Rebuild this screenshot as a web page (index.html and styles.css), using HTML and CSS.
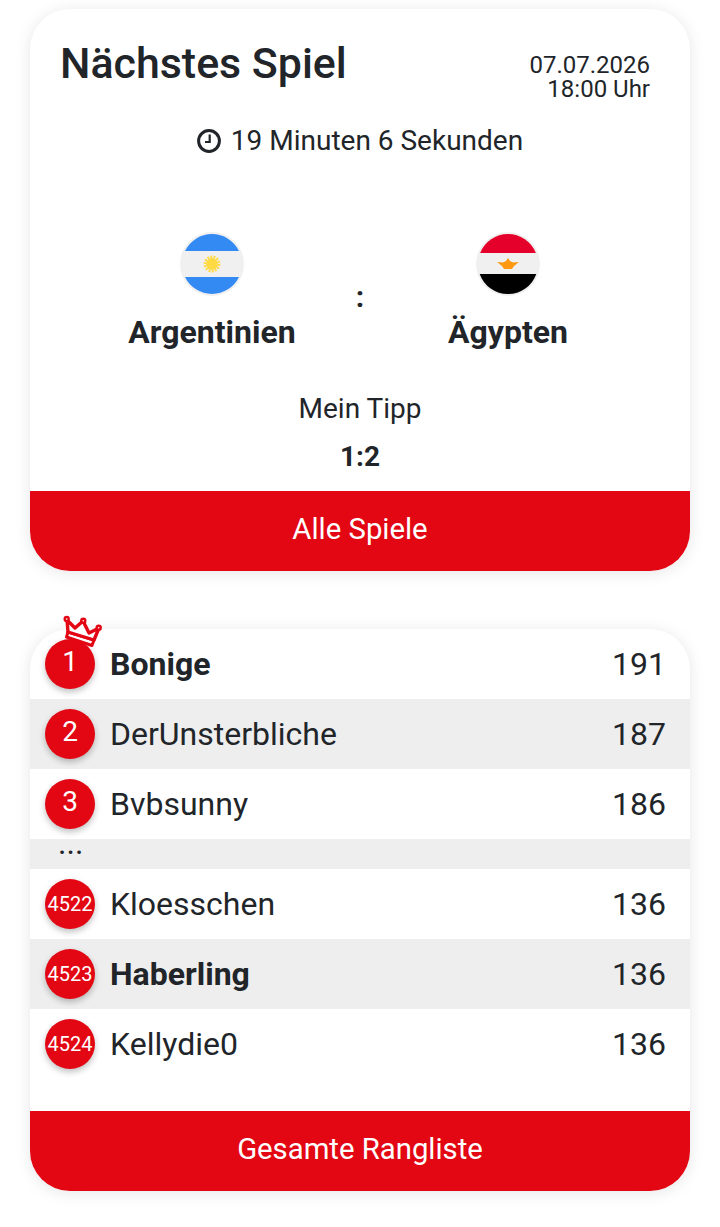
FILE: index.html
```
<!DOCTYPE html>
<html lang="de">
<head>
<meta charset="utf-8">
<title>Nächstes Spiel</title>
<link rel="stylesheet" href="styles.css">
</head>
<body>
<main class="page">
  <section class="card match">
    <div class="match-body">
      <header class="match-head">
        <h1 class="title">Nächstes Spiel</h1>
        <div class="when"><div>07.07.2026</div><div>18:00 Uhr</div></div>
      </header>
      <div class="countdown">
        <svg class="clock" viewBox="0 0 24 24" width="24" height="24"><circle cx="12" cy="12" r="10.400" fill="none" stroke="#212529" stroke-width="3"/><path d="M12.700 5.500v7.500H8" fill="none" stroke="#212529" stroke-width="2.200"/></svg>
        <span>19 Minuten 6 Sekunden</span>
      </div>
      <div class="teams">
        <div class="team">
          <svg class="flag" viewBox="0 0 64 64" width="64" height="64">
            <circle cx="32" cy="32" r="32" fill="#f0f0f0"/>
            <path d="M5 19A30 30 0 0 1 59 19Z M5 45H59A30 30 0 0 1 5 45Z" fill="#338af3"/>
            <circle cx="32" cy="32" r="6" fill="#ffda44"/>
            <circle cx="32" cy="32" r="7.200" fill="none" stroke="#ffda44" stroke-width="2.400" stroke-dasharray="2 1.200"/>
          </svg>
          <div class="team-name">Argentinien</div>
        </div>
        <div class="sep">:</div>
        <div class="team">
          <svg class="flag" viewBox="0 0 64 64" width="64" height="64">
            <circle cx="32" cy="32" r="32" fill="#f0f0f0"/>
            <path d="M4.100 21A30 30 0 0 1 59.900 21Z" fill="#e4002b"/>
            <path d="M3.700 42H60.300A30 30 0 0 1 3.700 42Z" fill="#000"/>
            <path d="M21 30L27 30.500L30 29L32 26L34 29L37 30.500L43 30L38 34L36 37H28L26 34Z" fill="#ff9811"/>
          </svg>
          <div class="team-name">Ägypten</div>
        </div>
      </div>
      <div class="tip">
        <div class="tip-label">Mein Tipp</div>
        <div class="tip-score">1:2</div>
      </div>
    </div>
    <a class="cta" href="#">Alle Spiele</a>
  </section>

  <section class="card board">
    <ol class="rank-list">
      <li class="rank-row is-me">
        <span class="badge">1
          <svg class="crown" viewBox="0 0 40 34" width="40" height="34"><g fill="#fff" stroke="#e30613" stroke-linejoin="round"><path d="M5 17L3.500 22L29 30.500L31 25Z" stroke-width="3"/><path d="M4 5L5 17L31 25L36 13L26 18L20 6L12 13Z" stroke-width="3.400"/></g><g fill="#e30613"><circle cx="3.700" cy="4" r="3.200"/><circle cx="20.300" cy="5.700" r="3.200"/><circle cx="35.700" cy="12.700" r="3.200"/></g><g fill="#fff"><circle cx="3.700" cy="4" r=".8"/><circle cx="20.300" cy="5.700" r=".8"/><circle cx="35.700" cy="12.700" r=".8"/></g></svg>
        </span>
        <span class="name">Bonige</span><span class="pts">191</span>
      </li>
      <li class="rank-row alt"><span class="badge">2</span><span class="name">DerUnsterbliche</span><span class="pts">187</span></li>
      <li class="rank-row"><span class="badge">3</span><span class="name">Bvbsunny</span><span class="pts">186</span></li>
      <li class="gap-row alt">...</li>
      <li class="rank-row"><span class="badge small">4522</span><span class="name">Kloesschen</span><span class="pts">136</span></li>
      <li class="rank-row alt is-me"><span class="badge small">4523</span><span class="name">Haberling</span><span class="pts">136</span></li>
      <li class="rank-row"><span class="badge small">4524</span><span class="name">Kellydie0</span><span class="pts">136</span></li>
    </ol>
    <a class="cta" href="#">Gesamte Rangliste</a>
  </section>
</main>
</body>
</html>
```

FILE: styles.css
```
* { box-sizing: border-box; }
html, body { margin: 0; background: #fff; }
body { font-family: Roboto, "Liberation Sans", sans-serif; color: #212529; }
.page { display: flex; flex-direction: column; gap: 58px; padding: 9px 30px 36px; }
.card { background: #fff; border-radius: 40px; box-shadow: 0 2px 16px rgba(0,0,0,.1); }
.match-body { padding: 0 40px 0 30px; height: 482px; display: flex; flex-direction: column; }
.match-head { display: flex; justify-content: space-between; align-items: flex-start; padding-top: 29px; }
.title { margin: 0; font-size: 42.900px; line-height: 50px; font-weight: 500; }
.when { font-size: 24px; line-height: 24px; text-align: right; font-weight: 400; padding-top: 15px; }
.countdown { display: flex; justify-content: center; align-items: center; gap: 10px; font-size: 28px; line-height: 34px; font-weight: 400; margin: 23px 0 0; padding-left: 10px; }
.clock { flex: none; }
.teams { display: grid; grid-template-columns: 1fr 56px 1fr; margin: 74px -40px 0 -30px; padding: 0 62px; }
.team { display: flex; flex-direction: column; align-items: center; }
.flag { display: block; }
.team-name { font-size: 32px; line-height: 36px; font-weight: 700; margin-top: 18px; white-space: nowrap; }
.sep { text-align: center; font-size: 30px; line-height: 36px; font-weight: 700; padding-top: 47px; }
.tip { text-align: center; margin-top: 42px; padding-left: 10px; }
.tip-label { font-size: 28px; line-height: 34px; font-weight: 400; }
.tip-score { font-size: 28px; line-height: 34px; font-weight: 700; margin-top: 14px; }
.cta { display: block; height: 80px; line-height: 76px; background: #e30613; color: #fff; text-align: center; font-size: 29.300px; font-weight: 400; text-decoration: none; border-radius: 0 0 40px 40px; }
.rank-list { list-style: none; margin: 0; padding: 0 0 32px; }
.rank-row { display: flex; align-items: center; height: 70px; padding: 0 24px 0 15px; font-size: 32px; font-weight: 400; }
.alt { background: #eee; }
.badge { position: relative; flex: none; width: 50px; height: 50px; border-radius: 50%; background: #e30613; color: #fff; font-size: 28px; line-height: 46px; text-align: center; margin-right: 15px; box-shadow: 0 3px 6px rgba(0,0,0,.25); }
.badge.small { font-size: 20px; line-height: 50px; }
.crown { position: absolute; left: 18px; top: -24px; }
.name { flex: 1; }
.is-me .name { font-weight: 700; }
.gap-row { height: 30px; padding-left: 28px; font-size: 32px; line-height: 8px; }
```
